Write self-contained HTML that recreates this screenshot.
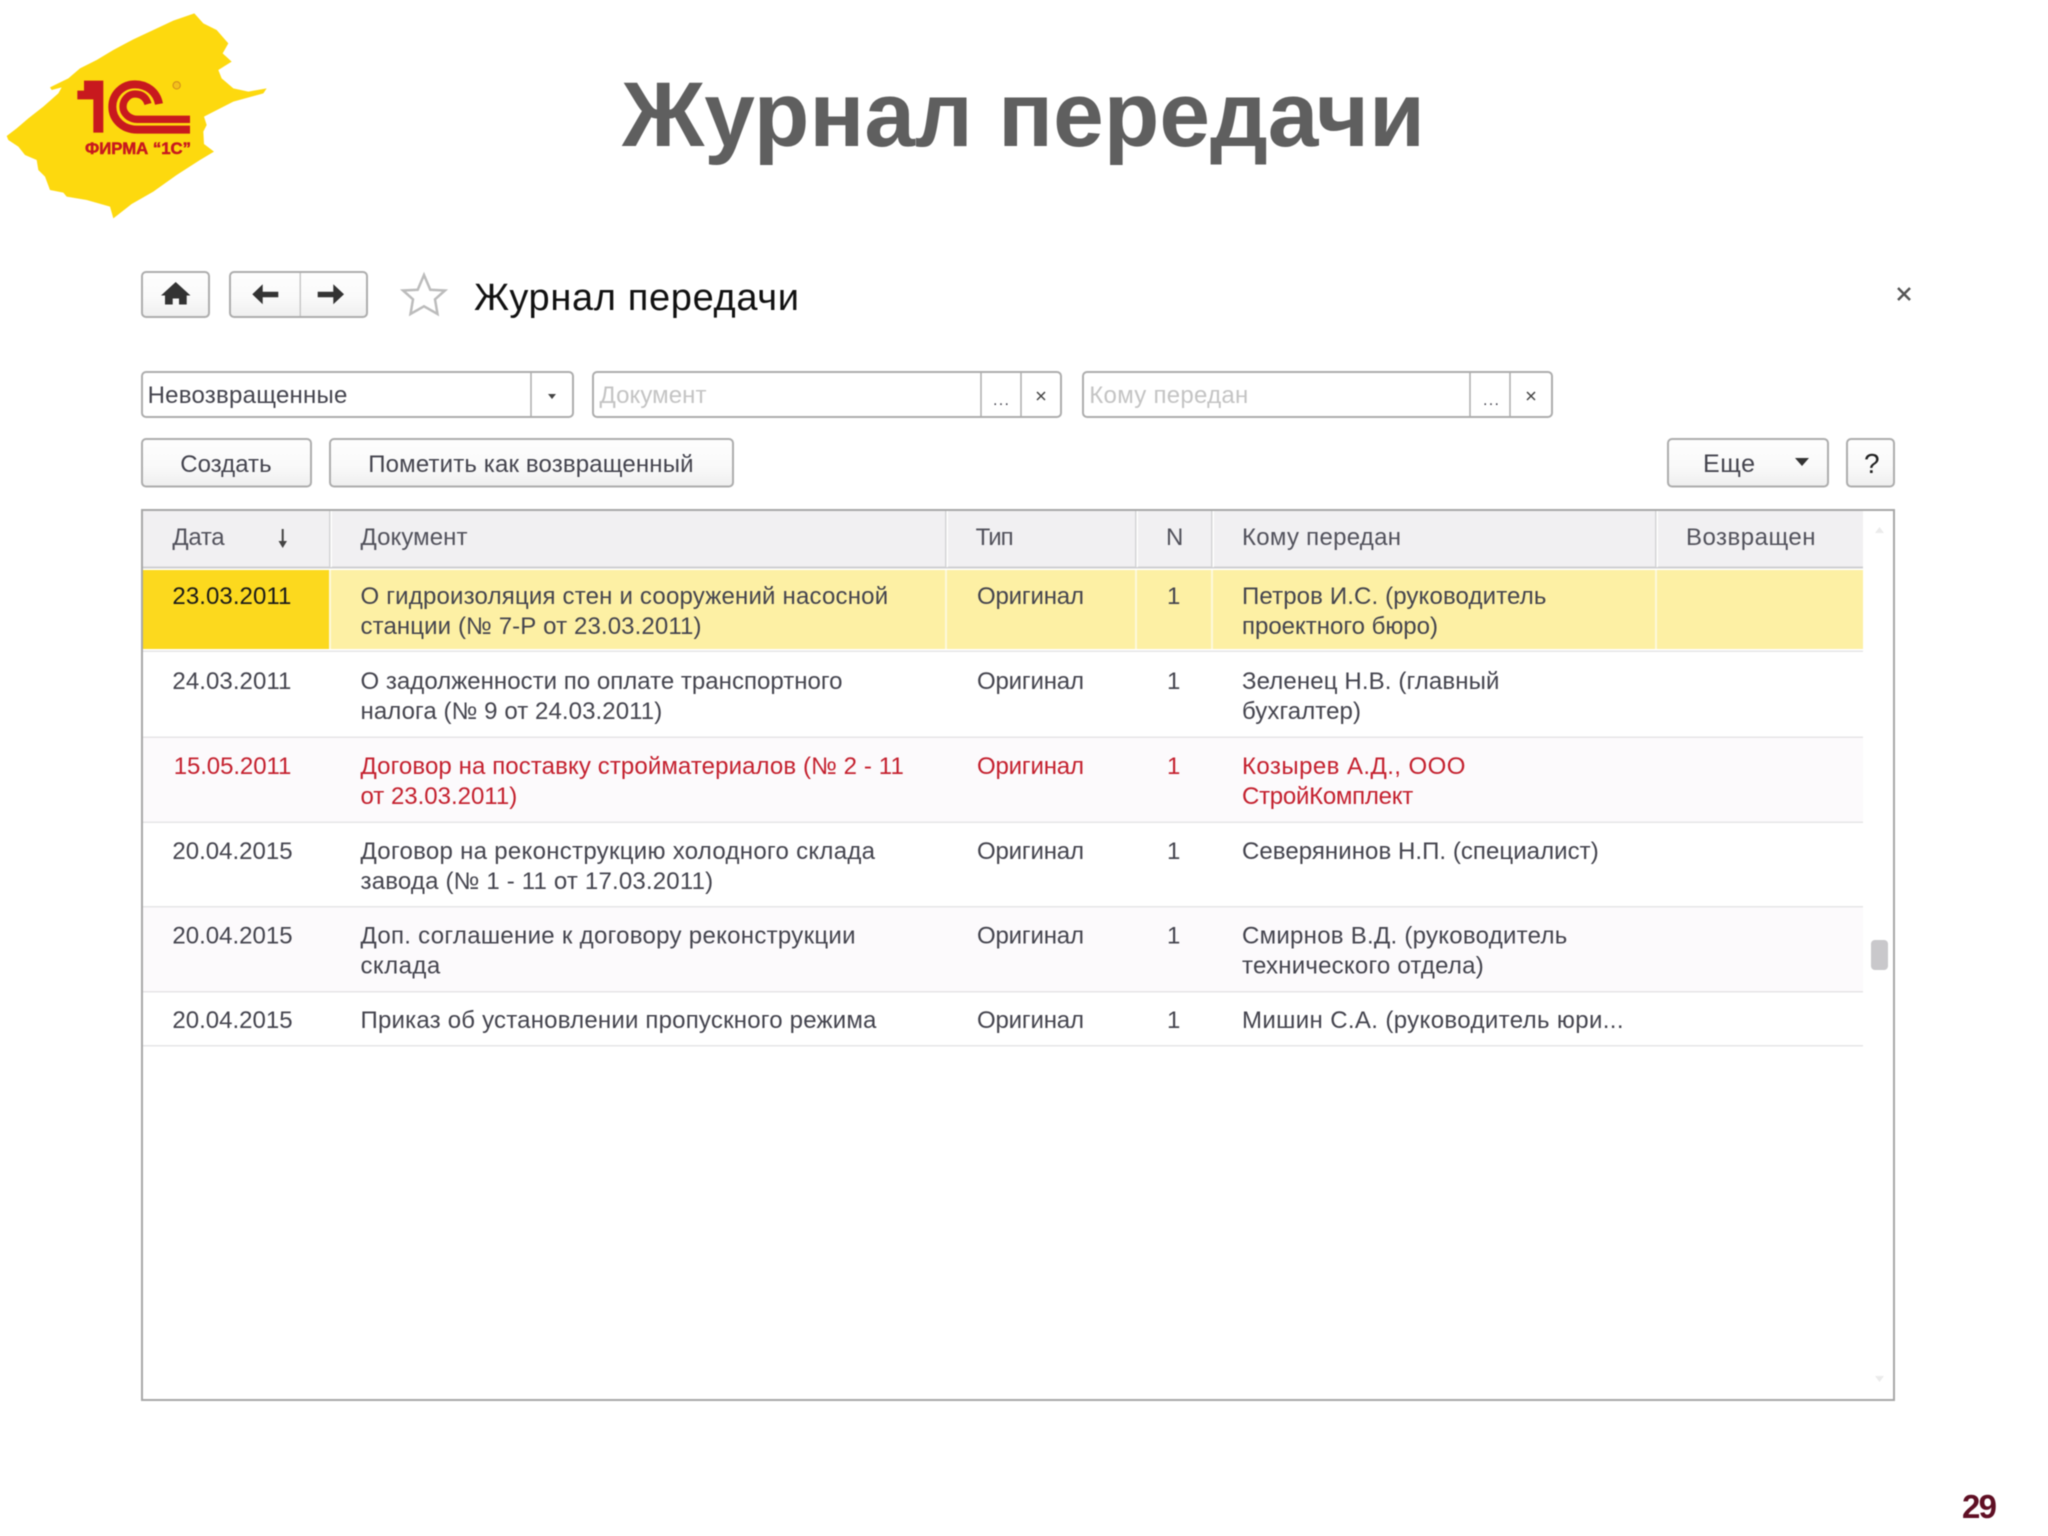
<!DOCTYPE html>
<html lang="ru"><head><meta charset="utf-8"><title>Журнал передачи</title>
<style>
html,body{margin:0;padding:0;background:#fff;width:2048px;height:1536px;overflow:hidden}
svg{display:block;filter:blur(.5px)}
text{font-family:"Liberation Sans",sans-serif;font-size:24px;fill:#44444e}
.r text,text.r{fill:#c4202e}
.h text{fill:#52525c}
.b{fill:url(#g);stroke:#adadad;stroke-width:2}
.f{fill:#fff;stroke:#adadad;stroke-width:2}
.l{stroke:#adadad;stroke-width:1.5}
.rl{fill:#e6e5e7}
</style></head><body>
<svg xmlns="http://www.w3.org/2000/svg" width="2048" height="1536" viewBox="0 0 2048 1536">
<defs><linearGradient id="g" x1="0" y1="0" x2="0" y2="1"><stop offset="0" stop-color="#fefefe"/><stop offset=".55" stop-color="#fafafa"/><stop offset="1" stop-color="#efefef"/></linearGradient></defs>

<!-- logo -->
<g transform="scale(.33333)">
<polygon fill="#fdd90e" points="583,40 520,62 460,90 400,118 340,150 290,180 240,205 205,235 185,245 150,262 155,270 185,262 175,280 130,320 85,355 50,385 20,408 25,420 55,440 75,465 110,480 115,510 135,530 150,570 190,578 200,590 260,600 330,620 340,655 395,612 460,575 530,525 600,480 642,455 612,432 610,395 620,375 612,350 700,305 790,280 800,265 745,275 700,265 665,235 655,210 695,185 668,160 685,130 650,90 610,70"/>
</g>
<g transform="translate(60 60) scale(.33333)">
<polygon fill="#c8191e" points="72,62 130,62 130,218 100,218 100,118 52,118 52,92 72,92"/>
<path fill="none" stroke="#c8191e" stroke-width="24" d="M297 132C290 95 260 73 225 73C185 73 157 105 157 140C157 180 190 209 232 209H390"/>
<path fill="none" stroke="#c8191e" stroke-width="22" d="M264 132C258 112 245 102 225 102C205 102 189 120 189 140C189 160 208 178 232 178H390"/>
<circle cx="350" cy="76" r="11" fill="#f4c11a" stroke="#d08a1c" stroke-width="3"/>
</g>
<text x="85" y="154" textLength="106" lengthAdjust="spacingAndGlyphs" style="font-size:17px;font-weight:bold;fill:#c8191e;stroke:#c8191e;stroke-width:.5">ФИРМА “1С”</text>

<!-- slide title -->
<text x="622" y="146" textLength="803" lengthAdjust="spacingAndGlyphs" style="font-size:92px;font-weight:bold;fill:#5f5f5f">Журнал передачи</text>

<!-- nav -->
<rect class="b" x="142" y="272" width="67" height="45" rx="4"/>
<path fill="#333" d="M175.700 282L190.500 295.500H186.700V304.500H179V298.500H172.700V304.500H165V295.500H161Z"/>
<rect class="b" x="230" y="272" width="137" height="45" rx="4"/>
<rect x="299.500" y="273" width="1.500" height="43" fill="#c9c9c9"/>
<path fill="#333" d="M252.300 294.300L262.700 284.300V291.700H278.300V297.300H262.700V304.300Z"/>
<path fill="#333" d="M344 294.300L333.300 284.300V291.700H317.700V297.300H333.300V304.300Z"/>
<polygon fill="#fff" stroke="#bcbcbc" stroke-width="2.500" points="424,275 430.300,289.800 445,290.500 435,299.300 437.500,314 424,306.300 410.500,314 413,299.300 403,290.500 417.700,289.800"/>
<text x="474" y="310" textLength="325" style="font-size:38px;fill:#111">Журнал передачи</text>
<path stroke="#555" stroke-width="2.500" fill="none" d="M1898 288L1910 300M1910 288L1898 300"/>

<!-- filter fields -->
<rect class="f" x="142" y="372" width="431" height="45" rx="4"/>
<path class="l" d="M531 373V416"/>
<polygon fill="#444" points="548,394 556,394 552,399"/>
<text x="147.600" y="403" textLength="199.800">Невозвращенные</text>

<rect class="f" x="593" y="372" width="468" height="45" rx="4"/>
<path class="l" d="M981 373V416M1021 373V416"/>
<text x="599.500" y="403" textLength="107" style="fill:#c4c4c4">Документ</text>
<text x="993" y="405" textLength="16" style="font-size:16px">...</text>
<path stroke="#444" stroke-width="1.500" fill="none" d="M1037 392L1045 400M1045 392L1037 400"/>

<rect class="f" x="1083" y="372" width="469" height="45" rx="4"/>
<path class="l" d="M1470 373V416M1510 373V416"/>
<text x="1089.300" y="403" textLength="159" style="fill:#c4c4c4">Кому передан</text>
<text x="1483" y="405" textLength="16" style="font-size:16px">...</text>
<path stroke="#444" stroke-width="1.500" fill="none" d="M1527 392L1535 400M1535 392L1527 400"/>

<!-- command bar -->
<rect class="b" x="142" y="439" width="169" height="47.500" rx="4"/>
<text x="180.200" y="472" textLength="91.400">Создать</text>
<rect class="b" x="330" y="439" width="403" height="47.500" rx="4"/>
<text x="368.300" y="472" textLength="325.200">Пометить как возвращенный</text>
<rect class="b" x="1668" y="439" width="160" height="47.500" rx="4"/>
<text x="1703" y="472" textLength="52" style="font-size:25px">Еще</text>
<polygon fill="#333" points="1795,458 1809,458 1802,466"/>
<rect class="b" x="1847" y="439" width="47" height="47.500" rx="4"/>
<text x="1864" y="473" textLength="15" style="font-size:28px;fill:#222">?</text>

<!-- table -->
<rect x="142" y="510" width="1752" height="890" fill="#fff" stroke="#a8a8a8" stroke-width="2"/>
<rect x="143" y="511" width="1720" height="56" fill="#f1f0f2"/>
<rect x="143" y="566.500" width="1720" height="2" fill="#cfcfd1"/>
<g fill="#d4d4d6"><rect x="329" y="511" width="1.500" height="56"/><rect x="945" y="511" width="1.500" height="56"/><rect x="1135" y="511" width="1.500" height="56"/><rect x="1211" y="511" width="1.500" height="56"/><rect x="1655" y="511" width="1.500" height="56"/></g>
<g fill="#fff"><rect x="330.500" y="511" width="1.500" height="56"/><rect x="946.500" y="511" width="1.500" height="56"/><rect x="1136.500" y="511" width="1.500" height="56"/><rect x="1212.500" y="511" width="1.500" height="56"/><rect x="1656.500" y="511" width="1.500" height="56"/></g>

<rect x="143" y="570" width="1720" height="79" fill="#fdf0a4"/>
<rect x="143" y="570" width="186" height="79" fill="#fcd91e"/>
<g fill="#fdf9dc"><rect x="329" y="570" width="2" height="79"/><rect x="945" y="570" width="2" height="79"/><rect x="1135" y="570" width="2" height="79"/><rect x="1211" y="570" width="2" height="79"/><rect x="1655" y="570" width="2" height="79"/></g>
<rect x="143" y="738" width="1720" height="84" fill="#fcfafc"/>
<rect x="143" y="907" width="1720" height="84" fill="#fcfafc"/>
<g class="rl"><rect x="143" y="650.500" width="1720" height="1.500"/><rect x="143" y="736.500" width="1720" height="1.500"/><rect x="143" y="821.500" width="1720" height="1.500"/><rect x="143" y="906" width="1720" height="1.500"/><rect x="143" y="991" width="1720" height="1.500"/><rect x="143" y="1045" width="1720" height="1.500"/></g>

<g transform="translate(0 -1)">
<g class="h">
<text x="172.400" y="546" textLength="52.200">Дата</text>
<text x="360.500" y="546" textLength="107">Документ</text>
<text x="975.600" y="546" textLength="38">Тип</text>
<text x="1166" y="546" textLength="17">N</text>
<text x="1242" y="546" textLength="159">Кому передан</text>
<text x="1686" y="546" textLength="129.500">Возвращен</text>
</g>

<!-- row 1 -->
<text x="172.400" y="605" textLength="119" style="fill:#1a1a1a">23.03.2011</text>
<text x="360.500" y="605" textLength="527.600">О гидроизоляция стен и сооружений насосной</text>
<text x="360.500" y="635" textLength="341">станции (№ 7-Р от 23.03.2011)</text>
<text x="977" y="605" textLength="107">Оригинал</text>
<text x="1167" y="605" textLength="13">1</text>
<text x="1242" y="605" textLength="304.400">Петров И.С. (руководитель</text>
<text x="1242" y="635" textLength="196">проектного бюро)</text>
<!-- row 2 -->
<text x="172.400" y="690" textLength="119">24.03.2011</text>
<text x="360.500" y="690" textLength="482">О задолженности по оплате транспортного</text>
<text x="360.500" y="720" textLength="301.700">налога (№ 9 от 24.03.2011)</text>
<text x="977" y="690" textLength="107">Оригинал</text>
<text x="1167" y="690" textLength="13">1</text>
<text x="1242" y="690" textLength="257.400">Зеленец Н.В. (главный</text>
<text x="1242" y="720" textLength="119">бухгалтер)</text>
<!-- row 3 -->
<g class="r">
<text x="173.700" y="775" textLength="117.600">15.05.2011</text>
<text x="360.500" y="775" textLength="543.300">Договор на поставку стройматериалов (№ 2 - 11</text>
<text x="360.500" y="805" textLength="156.700">от 23.03.2011)</text>
<text x="977" y="775" textLength="107">Оригинал</text>
<text x="1167" y="775" textLength="13">1</text>
<text x="1242" y="775" textLength="223.400">Козырев А.Д., ООО</text>
<text x="1242" y="805" textLength="171.200">СтройКомплект</text>
</g>
<!-- row 4 -->
<text x="172.400" y="860" textLength="120.200">20.04.2015</text>
<text x="360.500" y="860" textLength="514.500">Договор на реконструкцию холодного склада</text>
<text x="360.500" y="890" textLength="352.600">завода (№ 1 - 11 от 17.03.2011)</text>
<text x="977" y="860" textLength="107">Оригинал</text>
<text x="1167" y="860" textLength="13">1</text>
<text x="1242" y="860" textLength="356.700">Северянинов Н.П. (специалист)</text>
<!-- row 5 -->
<text x="172.400" y="944.500" textLength="120.200">20.04.2015</text>
<text x="360.500" y="944.500" textLength="495">Доп. соглашение к договору реконструкции</text>
<text x="360.500" y="974.500" textLength="79.700">склада</text>
<text x="977" y="944.500" textLength="107">Оригинал</text>
<text x="1167" y="944.500" textLength="13">1</text>
<text x="1242" y="944.500" textLength="325.300">Смирнов В.Д. (руководитель</text>
<text x="1242" y="974.500" textLength="241.700">технического отдела)</text>
<!-- row 6 -->
<text x="172.400" y="1029" textLength="120.200">20.04.2015</text>
<text x="360.500" y="1029" textLength="515.900">Приказ об установлении пропускного режима</text>
<text x="977" y="1029" textLength="107">Оригинал</text>
<text x="1167" y="1029" textLength="13">1</text>
<text x="1242" y="1029" textLength="381.500">Мишин С.А. (руководитель юри...</text>
</g>
<path stroke="#444" stroke-width="2" fill="none" d="M282.700 529V546"/>
<polygon fill="#444" points="278.500,541 287,541 282.700,548"/>

<!-- scrollbar -->
<polygon fill="#ebebeb" points="1875,533 1884,533 1879.500,527"/>
<rect x="1871" y="940" width="17" height="30" rx="4" fill="#c9c8cb"/>
<polygon fill="#ebebeb" points="1875,1376 1884,1376 1879.500,1382"/>

<text x="1962" y="1518" textLength="35" style="font-size:33px;font-weight:bold;fill:#5f0f24">29</text>
</svg>
</body></html>
